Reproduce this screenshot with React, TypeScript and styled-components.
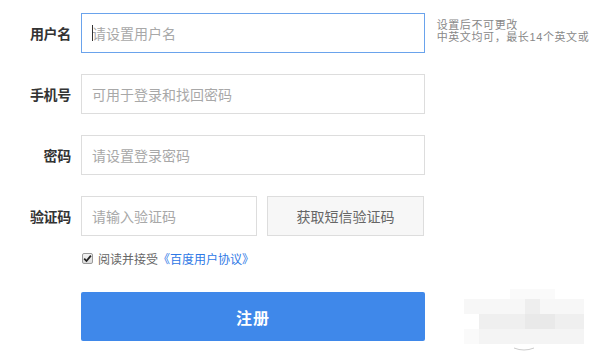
import React from "react";
import styled, { createGlobalStyle } from "styled-components";

const Global = createGlobalStyle`
  html, body { margin: 0; padding: 0; background: #fff; }
  body { font-family: "Noto Sans CJK SC", "Noto Sans", Arial, sans-serif; width: 594px; height: 351px; overflow: hidden; position: relative; }
  * { box-sizing: border-box; }
`;

const Page = styled.div`
  position: relative;
  width: 594px;
  height: 351px;
  padding-top: 13px;
`;

const Form = styled.form`
  display: flex;
  flex-direction: column;
  gap: 21px;
`;

const Row = styled.div`
  display: grid;
  grid-template-columns: 71px auto auto;
  column-gap: 10px;
  align-items: center;
  height: 40px;
`;

const Label = styled.label`
  text-align: right;
  font-size: 14px;
  font-weight: 700;
  color: #333;
  letter-spacing: -0.3px;
`;

const FieldWrap = styled.div`
  position: relative;
  display: flex;
  gap: 10px;
`;

const Input = styled.input<{ $w: number; $focus?: boolean }>`
  width: ${(p) => p.$w}px;
  height: 40px;
  border: 1px solid ${(p) => (p.$focus ? "#6aa3ec" : "#dddddd")};
  background: #fff;
  padding: 0 10px;
  font-family: inherit;
  font-size: 14px;
  color: #333;
  outline: none;
  &::placeholder { color: #a8a8a8; }
`;

const Caret = styled.span`
  position: absolute;
  left: 11px;
  top: 12px;
  width: 1px;
  height: 16px;
  background: #333;
`;

const SmsButton = styled.button`
  width: 157px;
  height: 40px;
  border: 1px solid #dddddd;
  background: #f7f7f7;
  color: #666;
  font-family: inherit;
  font-size: 14px;
  padding: 0;
`;

const Hint = styled.div`
  align-self: start;
  margin-left: -3px;
  margin-top: 6px;
  font-family: "Liberation Sans", "Noto Sans CJK SC", sans-serif;
  font-size: 11px;
  line-height: 12px;
  color: #888;
  white-space: nowrap;
  letter-spacing: 0.6px;
`;

const AgreeRow = styled.div`
  display: flex;
  align-items: center;
  margin-left: 82px;
  margin-top: -7px;
  height: 16px;
  font-size: 12px;
  color: #666;
`;

const Check = styled.span`
  width: 11px;
  height: 11px;
  border: 1px solid #9a9a9a;
  border-radius: 2px;
  background: linear-gradient(#f4f4f4, #dcdcdc);
  display: inline-flex;
  align-items: center;
  justify-content: center;
  margin-right: 5px;
`;

const Link = styled.a`
  color: #2e78e6;
  text-decoration: none;
`;

const Submit = styled.button`
  margin-left: 81px;
  margin-top: 5px;
  width: 344px;
  height: 49px;
  border: none;
  border-radius: 2px;
  background: #3f88ea;
  color: #fff;
  font-family: inherit;
  font-size: 16px;
  font-weight: 700;
  letter-spacing: 1px;
`;

const Watermark = styled.svg`
  position: absolute;
  right: 0;
  bottom: 0;
`;

export default function App() {
  return (
    <Page>
      <Global />
      <Form onSubmit={(e) => e.preventDefault()}>
        <Row>
          <Label>用户名</Label>
          <FieldWrap>
            <Input $w={344} $focus placeholder="请设置用户名" />
            <Caret />
          </FieldWrap>
          <Hint>
            设置后不可更改
            <br />
            中英文均可，最长14个英文或
          </Hint>
        </Row>
        <Row>
          <Label>手机号</Label>
          <FieldWrap>
            <Input $w={344} placeholder="可用于登录和找回密码" />
          </FieldWrap>
        </Row>
        <Row>
          <Label>密码</Label>
          <FieldWrap>
            <Input $w={344} type="password" placeholder="请设置登录密码" />
          </FieldWrap>
        </Row>
        <Row>
          <Label>验证码</Label>
          <FieldWrap>
            <Input $w={176} placeholder="请输入验证码" />
            <SmsButton type="button">获取短信验证码</SmsButton>
          </FieldWrap>
        </Row>
        <AgreeRow>
          <Check>
            <svg width="9" height="9" viewBox="0 0 9 9">
              <path d="M1.2 4.6 L3.5 7 L7.9 1.6" fill="none" stroke="#222" strokeWidth="1.8" />
            </svg>
          </Check>
          阅读并接受<Link href="#">《百度用户协议》</Link>
        </AgreeRow>
        <Submit type="submit">注册</Submit>
      </Form>
      <Watermark width="130" height="62" viewBox="0 0 130 62">
        <rect x="46" y="0" width="45" height="15" fill="#fafafa" />
        <rect x="0" y="10" width="120" height="15" fill="#f7f7f7" />
        <rect x="61" y="10" width="15" height="15" fill="#eeeeee" />
        <rect x="15" y="25" width="105" height="15" fill="#efefef" />
        <rect x="61" y="25" width="30" height="15" fill="#e9e9e9" />
        <rect x="15" y="40" width="105" height="15" fill="#f4f4f4" />
        <rect x="0" y="40" width="15" height="15" fill="#fafafa" />
        <path d="M50 59 Q60 63 70 59" fill="none" stroke="#ccc" strokeWidth="1" />
      </Watermark>
    </Page>
  );
}
